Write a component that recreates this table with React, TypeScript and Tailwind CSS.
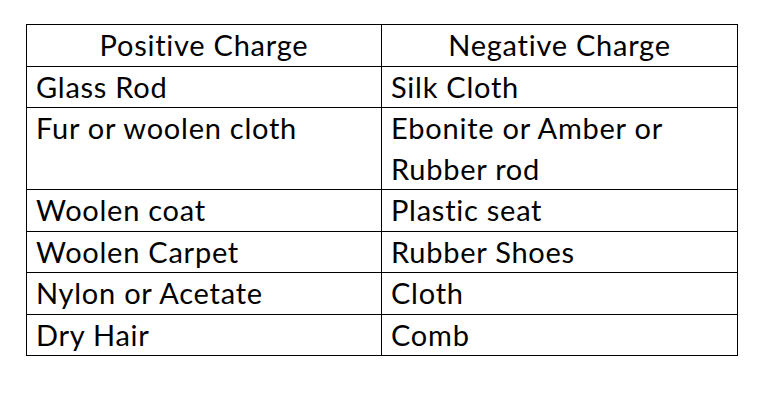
import React from 'react';

const rows: [string, string][] = [
  ['Glass Rod', 'Silk Cloth'],
  ['Fur or woolen cloth', 'Ebonite or Amber or Rubber rod'],
  ['Woolen coat', 'Plastic seat'],
  ['Woolen Carpet', 'Rubber Shoes'],
  ['Nylon or Acetate', 'Cloth'],
  ['Dry Hair', 'Comb'],
];

export default function App() {
  return (
    <div className="h-[402px] w-[768px] bg-white pl-[26px] pt-[24px] font-['Lato',sans-serif] text-[29px] leading-[40.5px] tracking-[0.75px] text-black">
      <table className="w-[712px] table-fixed border-collapse">
        <thead>
          <tr>
            <th className="w-[355px] border border-black px-[9px] py-0 text-center font-normal">
              Positive Charge
            </th>
            <th className="border border-black px-[9px] py-0 text-center font-normal">
              Negative Charge
            </th>
          </tr>
        </thead>
        <tbody>
          {rows.map(([pos, neg]) => (
            <tr key={pos}>
              <td className="border border-black py-0 pl-[9px] pr-[30px] align-top">{pos}</td>
              <td className="border border-black py-0 pl-[9px] pr-[50px] align-top">{neg}</td>
            </tr>
          ))}
        </tbody>
      </table>
    </div>
  );
}
